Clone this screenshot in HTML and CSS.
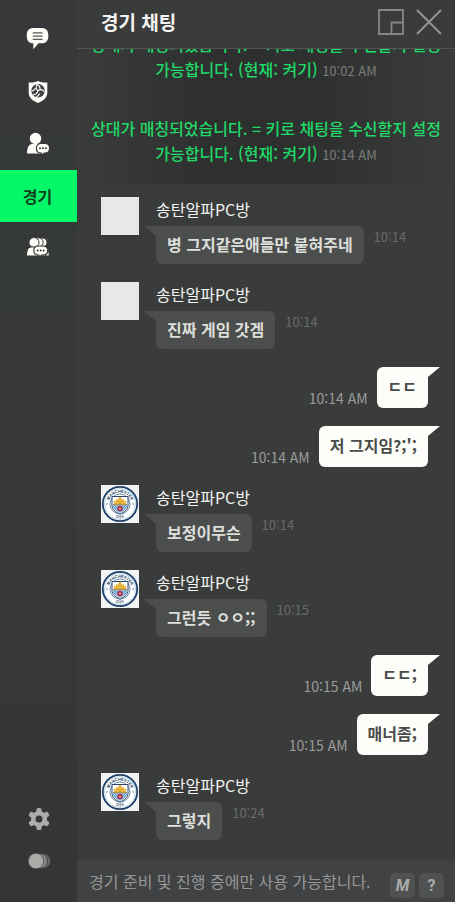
FILE: index.html
```html
<!DOCTYPE html>
<html lang="ko">
<head>
<meta charset="utf-8">
<meta name="viewport" content="width=device-width, initial-scale=1">
<title>경기 채팅</title>
<link rel="stylesheet" href="styles.css">
</head>
<body>
<svg class="defs" aria-hidden="true">
  <symbol id="crest" viewBox="0 0 38 38">
    <rect width="38" height="38" fill="#f1f3f5"/>
    <circle cx="19" cy="19" r="17.2" fill="#fff" stroke="#203f68" stroke-width="1.8"/>
    <circle cx="19" cy="19" r="15.6" fill="none" stroke="#a9cbe2" stroke-width=".8"/>
    <circle cx="19" cy="19" r="10" fill="#fff" stroke="#6d8aa8" stroke-width="1"/>
    <path id="arcTop" d="M7.600 19a11.400 11.400 0 0 1 22.800 0" fill="none"/>
    <path id="arcBottom" d="M4.600 19a14.400 14.400 0 0 0 28.800 0" fill="none"/>
    <text class="crest-text"><textPath href="#arcTop" startOffset="50%">MANCHESTER</textPath></text>
    <text class="crest-text"><textPath href="#arcBottom" startOffset="50%">CITY</textPath></text>
    <path d="M11 11.500h16v8.500c0 4.500-3.500 7-8 9.200-4.500-2.200-8-4.700-8-9.200z" fill="#fff" stroke="#29466c" stroke-width="1"/>
    <path d="M12 19h14v1.500c0 3.500-3 5.700-7 7.600-4-1.900-7-4.100-7-7.600z" fill="#86b3da"/>
    <path d="M13 19v-3.500l2 1v-3l2 1.500 1-3h2l1 3 2-1.500v3l2-1V19z" fill="#e5b23c"/>
    <path d="M12 19.400h14" stroke="#b98b2c" stroke-width="1"/>
    <circle cx="19" cy="23.500" r="2.700" fill="#b52b45"/>
    <circle cx="19" cy="23.500" r="1" fill="#e9c7a0"/>
    <circle cx="6" cy="19" r="1" fill="#8fb9d8"/><circle cx="32" cy="19" r="1" fill="#8fb9d8"/>
  </symbol>
</svg>
<div class="app">
  <nav class="sidebar" aria-label="채팅 메뉴">
    <button class="tab" aria-label="전체 채팅">
      <svg width="24" height="24" viewBox="0 0 22 22"><path d="M6.500 1h8c4 0 6 2.600 6 7s-2 7-6 7h-3l-4.800 5.300V15C2.500 15 .700 12.400 .700 8s1.800-7 5.800-7z" fill="#fdfef8"/><path d="M6.200 5.300h9M6.200 8.300h9M6.200 11.300h9" stroke="#5a5c5a" stroke-width="1.100"/></svg>
    </button>
    <button class="tab" aria-label="클럽 채팅">
      <svg width="22" height="24" viewBox="0 0 22 24"><path d="M11 1c3 1.300 6 1.700 9.300 1.500v10c0 5-3.500 8-9.300 10.500C5.200 20.500 1.700 17.500 1.700 12.500v-10C5 2.700 8 2.300 11 1z" fill="#fdfef8"/><circle cx="11" cy="10.700" r="6.800" fill="#414343"/><g fill="none" stroke="#fdfef8" stroke-width="1.100"><path d="M11 10.700c-2-1-2.500-3.500-1-6.500M11 10.700c2-1.500 4.500-1.200 6.500 1M11 10.700c-.5 2.500-2.500 4-5.500 4.500M13.200 9.500c0-2-1-4-3-5M8.500 8.300c-1 1.700-2.500 2.700-4.200 3M12.500 13.500c-.5 1.800-1.700 3-3.500 3.700"/></g></svg>
    </button>
    <button class="tab" aria-label="친구 채팅">
      <svg width="24" height="24" viewBox="0 0 24 24"><circle cx="9.500" cy="6.500" r="5.700" fill="#fdfef8"/><path d="M1 21.500c0-6 2-9.500 5-9.500h7c2.500 0 4 2 4.500 9.500z" fill="#fdfef8"/><path d="M15 11.500h4c2.800 0 4.600 1.900 4.600 4.700S22 21 19 21h-.8l-2.400 3-.2-3H15c-3 0-4.600-2-4.600-4.800s1.800-4.700 4.600-4.700z" fill="#fdfef8" stroke="#363838" stroke-width="1.200"/><g fill="#363838"><circle cx="14" cy="16.300" r="1"/><circle cx="17" cy="16.300" r="1"/><circle cx="20" cy="16.300" r="1"/></g></svg>
    </button>
    <button class="tab tab-active" aria-current="page">경기</button>
    <button class="tab" aria-label="그룹 채팅">
      <svg width="24" height="22" viewBox="0 0 24 22"><g fill="#fdfef8" stroke="#363838" stroke-width="1"><circle cx="16.500" cy="5.500" r="4.500"/><path d="M14 10h4c3.500 0 5 4 5.300 9H14z"/><circle cx="12.500" cy="5.500" r="4.700"/><path d="M9 10h6c3.500 0 4.500 4 4.800 9H9z"/><circle cx="8" cy="5.500" r="5"/><path d="M.500 19c0-5.500 1.700-9 4.500-9h6c2.500 0 4.500 3.500 4.500 9z"/></g><path d="M12.500 9h4.500c2.800 0 4.700 1.700 4.700 4.500s-1.900 4.700-4.700 4.700h-1.600L13 21.200v-3h-.5c-3 0-4.700-1.900-4.700-4.700S9.700 9 12.500 9z" fill="#fdfef8" stroke="#363838" stroke-width="1.200"/><g fill="#363838"><circle cx="11.700" cy="13.600" r="1"/><circle cx="14.700" cy="13.600" r="1"/><circle cx="17.700" cy="13.600" r="1"/></g></svg>
    </button>
    <div class="tools">
      <button class="tool" aria-label="설정">
        <svg width="22" height="22" viewBox="0 0 22 22"><g fill="#abada9"><circle cx="11" cy="11" r="8"/><rect x="8.500" y="0" width="5" height="22" rx="1.500"/><rect x="8.500" y="0" width="5" height="22" rx="1.500" transform="rotate(60 11 11)"/><rect x="8.500" y="0" width="5" height="22" rx="1.500" transform="rotate(120 11 11)"/></g><circle cx="11" cy="11" r="3.500" fill="#353736"/></svg>
      </button>
      <button class="tool" aria-label="투명도">
        <svg width="24" height="16" viewBox="0 0 24 16"><circle cx="16" cy="8" r="7.200" fill="#696b69"/><circle cx="13" cy="8" r="7.500" fill="#868885" stroke="#353736" stroke-width=".8"/><circle cx="9" cy="8" r="7.800" fill="#a9aba7" stroke="#353736" stroke-width=".6"/></svg>
      </button>
    </div>
  </nav>
  <main class="chat">
    <header class="chat-head">
      <h1 class="title">경기 채팅</h1>
      <button class="icon-button" aria-label="창 크기 조절"><svg width="26" height="26" viewBox="0 0 26 26"><path d="M1 1h24v24H1zM13.500 25V13.500H25" fill="none" stroke="#858785" stroke-width="1.800"/></svg></button>
      <button class="icon-button" aria-label="닫기"><svg width="26" height="26" viewBox="0 0 26 26"><path d="M1 1l24 24M25 1L1 25" fill="none" stroke="#929492" stroke-width="2"/></svg></button>
    </header>
    <div class="log">
      <section class="notices">
        <p class="notice">상대가 매칭되었습니다. = 키로 채팅을 수신할지 설정 가능합니다. (현재: 켜기) <time>10:02 AM</time></p>
        <p class="notice">상대가 매칭되었습니다. = 키로 채팅을 수신할지 설정 가능합니다. (현재: 켜기) <time>10:14 AM</time></p>
      </section>
      <section class="messages">
        <article class="message">
          <div class="avatar"></div>
          <div class="body"><div class="name">송탄알파PC방</div><div class="line"><p class="bubble">병 그지같은애들만 붙혀주네</p><time>10:14</time></div></div>
        </article>
        <article class="message">
          <div class="avatar"></div>
          <div class="body"><div class="name">송탄알파PC방</div><div class="line"><p class="bubble">진짜 게임 갓겜</p><time>10:14</time></div></div>
        </article>
        <article class="own"><time>10:14 AM</time><p class="bubble">ㄷㄷ</p></article>
        <article class="own"><time>10:14 AM</time><p class="bubble">저 그지임?;';</p></article>
        <article class="message">
          <svg class="avatar"><use href="#crest"/></svg>
          <div class="body"><div class="name">송탄알파PC방</div><div class="line"><p class="bubble">보정이무슨</p><time>10:14</time></div></div>
        </article>
        <article class="message">
          <svg class="avatar"><use href="#crest"/></svg>
          <div class="body"><div class="name">송탄알파PC방</div><div class="line"><p class="bubble">그런듯 ㅇㅇ;;</p><time>10:15</time></div></div>
        </article>
        <article class="own"><time>10:15 AM</time><p class="bubble">ㄷㄷ;</p></article>
        <article class="own"><time>10:15 AM</time><p class="bubble">매너좀;</p></article>
        <article class="message">
          <svg class="avatar"><use href="#crest"/></svg>
          <div class="body"><div class="name">송탄알파PC방</div><div class="line"><p class="bubble">그렇지</p><time>10:24</time></div></div>
        </article>
      </section>
    </div>
    <form class="composer">
      <input class="entry" type="text" aria-label="메시지 입력" placeholder="경기 준비 및 진행 중에만 사용 가능합니다." disabled>
      <button class="key key-macro" type="button">M</button>
      <button class="key" type="button">?</button>
    </form>
  </main>
</div>
</body>
</html>
```
FILE: styles.css
```css
* { box-sizing: border-box; }

body, h1, p { margin: 0; }

body {
  background: #3a3c3b;
  color: #f3f4f1;
  font: 16px/24px "Noto Sans CJK KR", "Noto Sans", sans-serif;
}

button {
  display: flex;
  align-items: center;
  justify-content: center;
  padding: 0;
  border: 0;
  background: none;
  color: inherit;
  font: inherit;
  cursor: pointer;
}

.defs { position: absolute; width: 0; height: 0; }

.crest-text {
  fill: #263f62;
  font: bold 4px "Liberation Sans", sans-serif;
  text-anchor: middle;
}

.app { display: flex; height: 100vh; }

/* Sidebar */
.sidebar {
  display: flex;
  flex: 0 0 77px;
  flex-direction: column;
  padding: 12px 0 20px;
  background: linear-gradient(#363839, #363938 50%, #343635);
}

.tab {
  width: 100%;
  height: 52px;
  padding-right: 2px;
}

.tab:first-child { height: 54px; }

.tab-active {
  background: #03f766;
  color: #12401f;
  font-weight: 700;
}

.tools { margin-top: auto; }

.tool { width: 100%; height: 42px; }

/* Header */
.chat {
  display: flex;
  flex: 1;
  flex-direction: column;
  min-width: 0;
}

.chat-head {
  display: flex;
  flex: none;
  align-items: center;
  gap: 12px;
  height: 49px;
  padding: 0 13px 4px 24px;
  border-bottom: 1px solid #515352;
}

.title {
  flex: 1;
  font-size: 19px;
  line-height: 28px;
}

/* Conversation, kept at its newest message */
.log {
  display: flex;
  flex: 1;
  flex-direction: column;
  justify-content: flex-end;
  min-height: 0;
  overflow: hidden;
}

.notices {
  flex: none;
  background: linear-gradient(90deg, #3a3c3b, #2e302f 35%, #2e302f 60%, #3a3c3b);
}

.notice {
  padding: 16px 8px 17px;
  color: #20d968;
  font-weight: 500;
  line-height: 25px;
  text-align: center;
  word-break: keep-all;
}

.notice time {
  color: #7b7d7c;
  font-size: 13px;
  font-weight: 400;
  white-space: nowrap;
}

.messages {
  display: flex;
  flex: none;
  flex-direction: column;
  gap: 18px;
  padding: 13px 27px 20px 24px;
}

.message { display: flex; gap: 17px; }

.avatar {
  flex: none;
  width: 38px;
  height: 38px;
  background: #e8e8e8;
}

.name { height: 29px; }

.line {
  display: flex;
  gap: 10px;
}

.line time {
  color: #696b6a;
  font-size: 13px;
  line-height: 22px;
}

.bubble {
  position: relative;
  padding: 6px 11px 8px;
  border-radius: 0 6px 6px 6px;
  background: #4c4e4d;
  color: #dddfdb;
  font-weight: 700;
}

.bubble::before {
  content: "";
  position: absolute;
  top: 0;
  right: 100%;
  width: 12px;
  height: 10px;
  background: inherit;
  clip-path: polygon(0 0, 100% 0, 100% 100%);
}

.own {
  display: flex;
  align-items: flex-end;
  justify-content: flex-end;
  gap: 9px;
}

.own time {
  color: #9b9d9b;
  font-size: 14px;
  line-height: 20px;
}

.own .bubble {
  padding: 7px 11px 10px;
  border-radius: 6px 0 6px 6px;
  background: #fdfef9;
  color: #4a4c4b;
}

.own .bubble::before {
  right: auto;
  left: 100%;
  clip-path: polygon(0 0, 100% 0, 0 100%);
}

/* Composer */
.composer {
  display: flex;
  flex: none;
  align-items: center;
  gap: 4px;
  height: 42px;
  padding: 0 11px 0 12px;
  background: #414244;
}

.entry {
  flex: 1;
  min-width: 0;
  height: 38px;
  margin-right: 8px;
  padding: 0;
  border: 0;
  background: none;
  font: inherit;
}

.entry::placeholder { color: #969896; opacity: 1; }

.key {
  align-self: flex-end;
  width: 25px;
  height: 25px;
  margin-bottom: 4px;
  border-radius: 5px;
  background: #505251;
  color: #aaacaa;
  font: bold 16px/24px Roboto, sans-serif;
}

.key-macro { font-style: italic; }
```
